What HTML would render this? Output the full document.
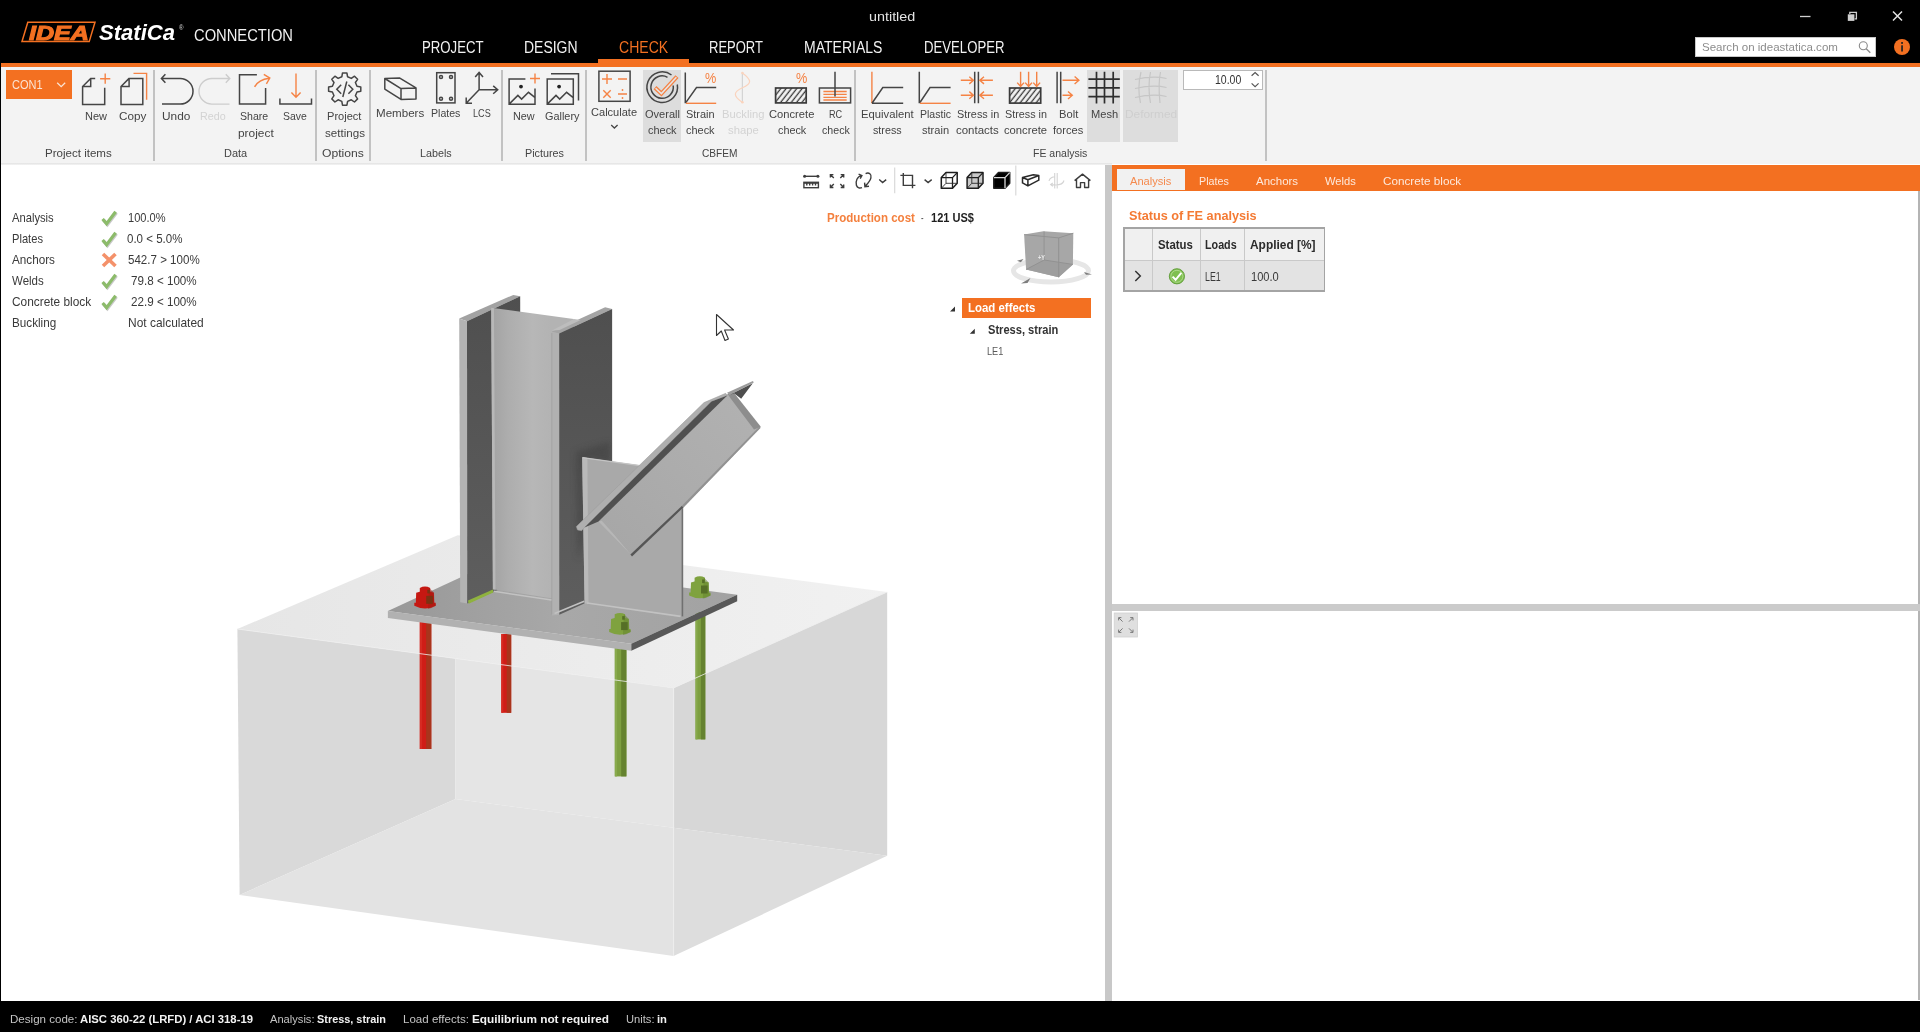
<!DOCTYPE html>
<html><head><meta charset="utf-8"><title>untitled</title>
<style>
*{box-sizing:border-box;margin:0;padding:0}
html,body{width:1920px;height:1032px;overflow:hidden;background:#fff;font-family:"Liberation Sans",sans-serif;}
#app{position:absolute;left:0;top:0;width:1920px;height:1032px;overflow:hidden;background:#fff}
.abs{position:absolute}
.t{position:absolute;white-space:nowrap;transform-origin:0 0}
svg{position:absolute;left:0;top:0;overflow:visible}
.k{fill:none;stroke:#454545;stroke-width:1.5}
.o{fill:none;stroke:#f58345;stroke-width:1.4}
.g{fill:none;stroke:#cdcdcd;stroke-width:1.4}
</style></head><body><div id="app">
<div class="abs" style="left:0;top:0;width:1920px;height:63px;background:#000"></div>
<div class="abs" style="left:0;top:63px;width:1920px;height:4px;background:#f37021"></div>
<div class="abs" style="left:598px;top:59px;width:91px;height:5px;background:#f37021"></div>
<svg width="320" height="60" viewBox="0 0 320 60"><polygon points="27.8,22.3 95,22.3 89.2,41.6 22,41.6" fill="none" stroke="#f37021" stroke-width="1.5"/></svg>
<div class="t" style="left:28.50px;top:23px;font-size:20.5px;line-height:20.5px;color:#f37021;font-weight:bold;font-style:italic;transform:scaleX(1.2246);-webkit-text-stroke:1.1px #f37021;">IDEA</div>
<div class="t" style="left:99.00px;top:23px;font-size:21.5px;line-height:21.5px;color:#fff;font-weight:bold;font-style:italic;transform:scaleX(1.0261);">StatiCa</div>
<div class="t" style="left:178.50px;top:25px;font-size:6.5px;line-height:6.5px;color:#ddd;transform:scaleX(0.9419);">®</div>
<div class="t" style="left:193.50px;top:28px;font-size:15.6px;line-height:15.6px;color:#f2f2f2;transform:scaleX(0.9444);">CONNECTION</div>
<div class="t" style="left:868.50px;top:11px;font-size:12.6px;line-height:12.6px;color:#e4e4e4;transform:scaleX(1.1394);">untitled</div>
<div class="t" style="left:421.80px;top:40px;font-size:15.8px;line-height:15.8px;color:#f2f2f2;transform:scaleX(0.8357);">PROJECT</div>
<div class="t" style="left:524.40px;top:40px;font-size:15.8px;line-height:15.8px;color:#f2f2f2;transform:scaleX(0.8846);">DESIGN</div>
<div class="t" style="left:618.80px;top:40px;font-size:15.8px;line-height:15.8px;color:#f37021;transform:scaleX(0.8897);">CHECK</div>
<div class="t" style="left:708.80px;top:40px;font-size:15.8px;line-height:15.8px;color:#f2f2f2;transform:scaleX(0.8235);">REPORT</div>
<div class="t" style="left:804.00px;top:40px;font-size:15.8px;line-height:15.8px;color:#f2f2f2;transform:scaleX(0.8869);">MATERIALS</div>
<div class="t" style="left:924.00px;top:40px;font-size:15.8px;line-height:15.8px;color:#f2f2f2;transform:scaleX(0.8332);">DEVELOPER</div>
<svg width="1920" height="63" viewBox="0 0 1920 63">
  <line x1="1800" y1="16.5" x2="1810.5" y2="16.5" stroke="#cfcfcf" stroke-width="1.3"/>
  <rect x="1847.8" y="14.3" width="6.6" height="6.6" fill="#cfcfcf"/>
  <path d="M1849.8 14 V12.3 H1856.4 V18.9 H1854.6" fill="none" stroke="#cfcfcf" stroke-width="1.3"/>
  <path d="M1893 11.5 L1902 20.5 M1902 11.5 L1893 20.5" stroke="#e4e4e4" stroke-width="1.5" fill="none"/>
  <rect x="1695.5" y="37.5" width="180" height="19" fill="#fff" stroke="#c8c8c8"/>
  <circle cx="1863.3" cy="45.7" r="4" fill="none" stroke="#8a8a8a" stroke-width="1.1"/><line x1="1866.2" y1="48.8" x2="1870.3" y2="52.8" stroke="#8a8a8a" stroke-width="1.3"/>
  <circle cx="1902" cy="47" r="8" fill="#f37021"/><rect x="1901.2" y="45.3" width="1.7" height="6.2" fill="#222"/><rect x="1901.2" y="42" width="1.7" height="1.9" fill="#222"/>
</svg>
<div class="t" style="left:1702.00px;top:41px;font-size:11.6px;line-height:11.6px;color:#8c8c8c;transform:scaleX(0.9948);">Search on ideastatica.com</div>
<div class="abs" style="left:0;top:67px;width:1920px;height:96.5px;background:#f3f3f3"></div>
<div class="abs" style="left:0;top:163px;width:1112px;height:2px;background:linear-gradient(#e2e2e2,#f4f4f4)"></div>
<div class="abs" style="left:153.3px;top:69.5px;width:1.4px;height:91px;background:#c2c2c2"></div>
<div class="abs" style="left:315.3px;top:69.5px;width:1.4px;height:91px;background:#c2c2c2"></div>
<div class="abs" style="left:369.3px;top:69.5px;width:1.4px;height:91px;background:#c2c2c2"></div>
<div class="abs" style="left:501.3px;top:69.5px;width:1.4px;height:91px;background:#c2c2c2"></div>
<div class="abs" style="left:585.3px;top:69.5px;width:1.4px;height:91px;background:#c2c2c2"></div>
<div class="abs" style="left:854.3px;top:69.5px;width:1.4px;height:91px;background:#c2c2c2"></div>
<div class="abs" style="left:1265.3px;top:69.5px;width:1.4px;height:91px;background:#c2c2c2"></div>
<div class="abs" style="left:642.5px;top:70.4px;width:38.39999999999998px;height:71.2px;background:#dddddd"></div>
<div class="abs" style="left:1087px;top:70.4px;width:33px;height:71.2px;background:#dddddd"></div>
<div class="abs" style="left:1123.1px;top:70.4px;width:54.700000000000045px;height:71.2px;background:#dddddd"></div>
<div class="abs" style="left:6px;top:69.5px;width:66px;height:29.5px;background:#f37021"></div>
<div class="t" style="left:11.80px;top:79px;font-size:12px;line-height:12px;color:#fbe3d3;transform:scaleX(0.9173);">CON1</div>
<div class="abs" style="left:1183.4px;top:69.6px;width:79.8px;height:20.2px;background:#fff;border:1.2px solid #b9b9b9"></div>
<div class="t" style="left:1215.30px;top:74px;font-size:12px;line-height:12px;color:#333;transform:scaleX(0.8749);">10.00</div>
<div class="t" style="left:84.60px;top:111px;font-size:11.8px;line-height:11.8px;color:#444;transform:scaleX(0.9299);">New</div>
<div class="t" style="left:119.20px;top:111px;font-size:11.8px;line-height:11.8px;color:#444;transform:scaleX(0.9908);">Copy</div>
<div class="t" style="left:162.10px;top:111px;font-size:11.8px;line-height:11.8px;color:#444;transform:scaleX(1.0035);">Undo</div>
<div class="t" style="left:200.30px;top:111px;font-size:11.8px;line-height:11.8px;color:#d3d3d3;transform:scaleX(0.9113);">Redo</div>
<div class="t" style="left:240.30px;top:111px;font-size:11.8px;line-height:11.8px;color:#444;transform:scaleX(0.8951);">Share</div>
<div class="t" style="left:237.80px;top:128px;font-size:11.8px;line-height:11.8px;color:#444;transform:scaleX(1.0085);">project</div>
<div class="t" style="left:282.80px;top:111px;font-size:11.8px;line-height:11.8px;color:#444;transform:scaleX(0.8846);">Save</div>
<div class="t" style="left:326.60px;top:111px;font-size:11.8px;line-height:11.8px;color:#444;transform:scaleX(0.9374);">Project</div>
<div class="t" style="left:324.70px;top:128px;font-size:11.8px;line-height:11.8px;color:#444;transform:scaleX(0.9840);">settings</div>
<div class="t" style="left:376.40px;top:108px;font-size:11.8px;line-height:11.8px;color:#444;transform:scaleX(0.9816);">Members</div>
<div class="t" style="left:431.30px;top:108px;font-size:11.8px;line-height:11.8px;color:#444;transform:scaleX(0.8962);">Plates</div>
<div class="t" style="left:472.80px;top:108px;font-size:11.8px;line-height:11.8px;color:#444;transform:scaleX(0.7712);">LCS</div>
<div class="t" style="left:512.80px;top:111px;font-size:11.8px;line-height:11.8px;color:#444;transform:scaleX(0.9172);">New</div>
<div class="t" style="left:545.00px;top:111px;font-size:11.8px;line-height:11.8px;color:#444;transform:scaleX(0.9223);">Gallery</div>
<div class="t" style="left:591.30px;top:107px;font-size:11.8px;line-height:11.8px;color:#444;transform:scaleX(0.9369);">Calculate</div>
<div class="t" style="left:644.70px;top:109px;font-size:11.8px;line-height:11.8px;color:#444;transform:scaleX(0.9357);">Overall</div>
<div class="t" style="left:648.20px;top:125px;font-size:11.8px;line-height:11.8px;color:#444;transform:scaleX(0.9269);">check</div>
<div class="t" style="left:686.10px;top:109px;font-size:11.8px;line-height:11.8px;color:#444;transform:scaleX(0.9286);">Strain</div>
<div class="t" style="left:686.10px;top:125px;font-size:11.8px;line-height:11.8px;color:#444;transform:scaleX(0.9269);">check</div>
<div class="t" style="left:721.60px;top:109px;font-size:11.8px;line-height:11.8px;color:#d3d3d3;transform:scaleX(0.9506);">Buckling</div>
<div class="t" style="left:728.10px;top:125px;font-size:11.8px;line-height:11.8px;color:#d3d3d3;transform:scaleX(0.9579);">shape</div>
<div class="t" style="left:769.30px;top:109px;font-size:11.8px;line-height:11.8px;color:#444;transform:scaleX(0.9476);">Concrete</div>
<div class="t" style="left:777.70px;top:125px;font-size:11.8px;line-height:11.8px;color:#444;transform:scaleX(0.9171);">check</div>
<div class="t" style="left:828.80px;top:109px;font-size:11.8px;line-height:11.8px;color:#444;transform:scaleX(0.7741);">RC</div>
<div class="t" style="left:821.50px;top:125px;font-size:11.8px;line-height:11.8px;color:#444;transform:scaleX(0.9009);">check</div>
<div class="t" style="left:861.30px;top:109px;font-size:11.8px;line-height:11.8px;color:#444;transform:scaleX(0.9545);">Equivalent</div>
<div class="t" style="left:873.30px;top:125px;font-size:11.8px;line-height:11.8px;color:#444;transform:scaleX(0.9095);">stress</div>
<div class="t" style="left:919.60px;top:109px;font-size:11.8px;line-height:11.8px;color:#444;transform:scaleX(0.8921);">Plastic</div>
<div class="t" style="left:921.50px;top:125px;font-size:11.8px;line-height:11.8px;color:#444;transform:scaleX(0.9393);">strain</div>
<div class="t" style="left:956.50px;top:109px;font-size:11.8px;line-height:11.8px;color:#444;transform:scaleX(0.9193);">Stress in</div>
<div class="t" style="left:956.00px;top:125px;font-size:11.8px;line-height:11.8px;color:#444;transform:scaleX(0.9714);">contacts</div>
<div class="t" style="left:1004.60px;top:109px;font-size:11.8px;line-height:11.8px;color:#444;transform:scaleX(0.9150);">Stress in</div>
<div class="t" style="left:1004.20px;top:125px;font-size:11.8px;line-height:11.8px;color:#444;transform:scaleX(0.9524);">concrete</div>
<div class="t" style="left:1058.60px;top:109px;font-size:11.8px;line-height:11.8px;color:#444;transform:scaleX(0.9482);">Bolt</div>
<div class="t" style="left:1053.00px;top:125px;font-size:11.8px;line-height:11.8px;color:#444;transform:scaleX(0.9423);">forces</div>
<div class="t" style="left:1090.90px;top:109px;font-size:11.8px;line-height:11.8px;color:#444;transform:scaleX(0.9393);">Mesh</div>
<div class="t" style="left:1124.80px;top:109px;font-size:11.8px;line-height:11.8px;color:#cfcfcf;transform:scaleX(1.0077);">Deformed</div>
<div class="t" style="left:45.00px;top:148px;font-size:11.8px;line-height:11.8px;color:#444;transform:scaleX(0.9794);">Project items</div>
<div class="t" style="left:224.00px;top:148px;font-size:11.8px;line-height:11.8px;color:#444;transform:scaleX(0.9296);">Data</div>
<div class="t" style="left:322.20px;top:148px;font-size:11.8px;line-height:11.8px;color:#444;transform:scaleX(1.0307);">Options</div>
<div class="t" style="left:420.30px;top:148px;font-size:11.8px;line-height:11.8px;color:#444;transform:scaleX(0.9122);">Labels</div>
<div class="t" style="left:524.80px;top:148px;font-size:11.8px;line-height:11.8px;color:#444;transform:scaleX(0.9155);">Pictures</div>
<div class="t" style="left:702.20px;top:148px;font-size:11.8px;line-height:11.8px;color:#444;transform:scaleX(0.8596);">CBFEM</div>
<div class="t" style="left:1033.30px;top:148px;font-size:11.8px;line-height:11.8px;color:#444;transform:scaleX(0.8917);">FE analysis</div>
<div class="t" style="left:705.40px;top:70px;font-size:15px;line-height:15px;color:#f58345;transform:scaleX(0.8464);">%</div>
<div class="t" style="left:795.80px;top:70px;font-size:15px;line-height:15px;color:#f58345;transform:scaleX(0.8464);">%</div>
<svg width="1920" height="170" viewBox="0 0 1920 170">
<path d="M57.2 82.8 L61.2 86.6 L65.2 82.8" fill="none" stroke="#fbe3d3" stroke-width="1.3"/>
<path d="M1251.6 75.8 L1255.1 72.5 L1258.6 75.8 M1251.6 83.4 L1255.1 86.7 L1258.6 83.4" fill="none" stroke="#555" stroke-width="1.2"/>
<path d="M611.2 125 L614.4 128 L617.6 125" fill="none" stroke="#444" stroke-width="1.3"/>
<path class="k" d="M95.2 78.4 H90.7 L82.6 86.5 V104.6 H104.7 V87.8 M90.7 78.4 V86.5 H82.6"/>
<path class="o" d="M105.2 73.6 V83.8 M100.1 78.7 H110.3"/>
<path class="k" d="M129.1 78.4 L121 86.5 V104.6 H142.8 V78.4 Z M129.1 78.4 V86.5 H121"/>
<path class="o" d="M133.5 73.4 H146.6 V99.8"/>
<path class="k" d="M165.4 74.2 L161.4 78.5 L165.4 82.8 M161.4 78.5 H180.2 A12.8 12.8 0 0 1 180.2 104.1 H162"/>
<path class="g" d="M225.8 74.2 L229.8 78.5 L225.8 82.8 M229.8 78.5 H211.8 A12.8 12.8 0 0 0 211.8 104.1 H229.5"/>
<path class="k" d="M256.9 74.8 H239.5 V104.1 H265.6 V87.9"/>
<path class="o" d="M254.6 86.8 Q258.5 79.5 269.3 78.2 M263.8 74.3 L269.8 78.1 L266.4 83.8"/>
<path class="k" d="M279.9 98.6 V104.1 H311.5 V98.6"/>
<path class="o" d="M296 73.6 V97.2 M291.4 92.4 L296 97.3 L300.6 92.4"/>
<path class="k" d="M357.0 86.2 L360.8 86.9 L360.8 91.3 L357.0 92.0 L355.4 95.7 L357.6 98.9 L354.5 102.0 L351.3 99.8 L347.6 101.4 L346.9 105.2 L342.5 105.2 L341.8 101.4 L338.1 99.8 L334.9 102.0 L331.8 98.9 L334.0 95.7 L332.4 92.0 L328.6 91.3 L328.6 86.9 L332.4 86.2 L334.0 82.5 L331.8 79.3 L334.9 76.2 L338.1 78.4 L341.8 76.8 L342.5 73.0 L346.9 73.0 L347.6 76.8 L351.3 78.4 L354.5 76.2 L357.6 79.3 L355.4 82.5 Z" stroke-linejoin="round"/>
<path class="k" d="M341.2 84.8 L336.8 89.3 L341.2 93.8 M348.4 84.8 L352.8 89.3 L348.4 93.8 M346.8 81.5 L342.8 97" stroke-width="1.3"/>
<path class="k" d="M384.8 78.5 L399.4 77.9 L416 87.9 L401 88.6 Z M401 88.6 V99.4 L416 99.1 V87.9 M384.8 78.5 V89.1 L401 99.4" stroke-linejoin="round"/>
<rect class="k" x="436.7" y="72.7" width="18.3" height="30.2"/><circle class="k" cx="441" cy="77" r="1.5" stroke-width="1.2"/><circle class="k" cx="441" cy="98.8" r="1.5" stroke-width="1.2"/><circle class="k" cx="451" cy="77" r="1.5" stroke-width="1.2"/><circle class="k" cx="451" cy="98.8" r="1.5" stroke-width="1.2"/>
<path class="k" d="M479.1 89.8 V72.6 M475.2 77 L479.1 72.4 L483 77 M479.1 89.8 H497.5 M493.2 85.9 L497.7 89.8 L493.2 93.7 M479.1 89.8 L466.4 103.1 M466.2 97.4 V103.3 H472"/>
<path class="k" d="M525.4 78.9 H509.1 V104.2 H535 V88.5 M509.6 103.6 L517.9 95.4 L521.6 99.1 L528.5 92.3 L534.8 97.3"/><circle cx="521" cy="86.6" r="1.9" fill="#222"/>
<path class="o" d="M535 73.5 V83.5 M530 78.5 H540"/>
<path class="k" d="M547.2 78.9 H573.3 V104.2 H547.2 Z M547.7 103.6 L556 95.4 L559.7 99.1 L566.6 92.3 L572.9 97.3 M551 73.8 H578.5 V100.4"/><circle cx="559.1" cy="86.6" r="1.9" fill="#222"/>
<rect class="k" x="598.9" y="71.2" width="31.2" height="30.1"/>
<path class="o" d="M607 74 V84 M602 79 H612 M618 79 H627 M603.3 90.3 L610.7 97.7 M610.7 90.3 L603.3 97.7 M618 94 H627"/><circle cx="622.5" cy="90" r="0.9" fill="#f58345"/><circle cx="622.5" cy="98" r="0.9" fill="#f58345"/>
<path class="k" d="M671.5 75 A15.3 15.3 0 1 0 677.3 84.5" stroke-width="1.6"/>
<path class="k" d="M667.5 77.3 A11.2 11.2 0 1 0 673.2 85.5" stroke-width="1.6"/>
<path d="M655 87.6 L661.4 93.6 L677 76.6" fill="none" stroke="#f58345" stroke-width="4.2" stroke-linejoin="miter"/><path d="M655.6 88.2 L661.4 93.6 L676.4 77.3" fill="none" stroke="#e6e6e6" stroke-width="1.5"/>
<path class="k" d="M685.3 72.6 V103.2 M685.8 102.6 L696.5 87.6 H716.2"/><path class="o" d="M686 103.3 H716.2"/>
<path d="M742.4 73 V102" fill="none" stroke="#d4d4d4" stroke-width="1.2"/><path d="M742.4 73 C752 80 752 84 742.4 87.7 C733 92 733 96 742.4 102.4" fill="none" stroke="#fad3bd" stroke-width="1.2"/><circle cx="742.4" cy="73" r="1.3" fill="#fad3bd"/><circle cx="742.4" cy="102.3" r="1.3" fill="#fad3bd"/>
<defs><pattern id="hat" width="4.2" height="4.2" patternUnits="userSpaceOnUse" patternTransform="rotate(-52)"><rect width="4.2" height="4.2" fill="#f3f3f3"/><line x1="0" y1="2" x2="4.2" y2="2" stroke="#3a3a3a" stroke-width="1.3"/></pattern></defs>
<rect x="775.6" y="88" width="30.6" height="14.9" fill="url(#hat)" stroke="#3a3a3a" stroke-width="1.7"/>
<rect class="k" x="819.4" y="88" width="31.2" height="14.9"/><path class="o" d="M823.4 91.5 H846.7 M823.4 94.4 H846.7 M823.4 97.4 H846.7 M823.4 100 H846.7" stroke-width="1"/><path class="k" d="M835 71.8 V96.6"/>
<path class="o" d="M871.9 71.8 V103.2"/><path class="k" d="M872 103.2 L882.8 87.6 H903.2 M872 103.2 H903.2"/>
<path class="k" d="M919.3 71.8 V103.2 M919.6 103 L930 87.6 H950.6"/><path class="o" d="M920 103.3 H950.6"/>
<path class="k" d="M974.7 71.8 V103.2 M978.4 71.8 V103.2"/><path class="o" d="M960.8 80.3 H973.2 M969.3 76.7 L973.4 80.3 L969.3 83.89999999999999 M992.9 80.3 H980 M984 76.7 L979.8 80.3 L984 83.89999999999999"/><path class="o" d="M960.8 95.2 H973.2 M969.3 91.60000000000001 L973.4 95.2 L969.3 98.8 M992.9 95.2 H980 M984 91.60000000000001 L979.8 95.2 L984 98.8"/>
<rect x="1009.6" y="88" width="31.1" height="15.1" fill="url(#hat)" stroke="#3a3a3a" stroke-width="1.7"/><path class="o" d="M1020.6 71.8 V86.2 M1017.2 82.6 L1020.6 86.5 L1024.0 82.6"/><path class="o" d="M1028.6 71.8 V86.2 M1025.1999999999998 82.6 L1028.6 86.5 L1032.0 82.6"/><path class="o" d="M1036.7 71.8 V86.2 M1033.3 82.6 L1036.7 86.5 L1040.1000000000001 82.6"/>
<path class="k" d="M1057.1 71.8 V103.2 M1060.7 71.8 V103.2"/><path class="o" d="M1062.5 80.3 H1078.6 M1074.6 76.5 L1078.9 80.3 L1074.6 84.1 M1062.5 95.2 H1072 M1068 91.4 L1072.3 95.2 L1068 99"/>
<path d="M1096.5 71.8 V103.6 M1104.5 71.8 V103.6 M1113.2 71.8 V103.6 M1088.4 79.1 H1119.8 M1088.4 87.9 H1119.8 M1088.4 96.6 H1119.8" fill="none" stroke="#2e2e2e" stroke-width="1.7"/>
<path d="M1141 72 C1138 84 1138 92 1140.5 103 M1150.5 72 C1148 84 1148.5 92 1150.5 103 M1160.5 72 C1158 84 1159 92 1160 103 M1135 79.5 C1146 77 1156 76 1166.5 78.5 M1135 88.5 C1146 86 1156 85 1166.5 87.5 M1135 97.5 C1146 95 1156 94 1166.5 96.5" fill="none" stroke="#c6c6c6" stroke-width="1.2"/>
</svg>
<svg width="1105" height="1000" viewBox="0 0 1105 1000">
<defs>
<filter id="blur3" x="-50%" y="-50%" width="200%" height="200%"><feGaussianBlur stdDeviation="3"/></filter>
<clipPath id="cpf"><polygon points="559.2,333.5 612.1,309.1 612.1,591 559.3,614.8"/></clipPath>
<linearGradient id="gweb" x1="0" x2="1" y1="0" y2="0"><stop offset="0" stop-color="#a2a2a2"/><stop offset="0.2" stop-color="#adadad"/><stop offset="0.5" stop-color="#b7b7b7"/><stop offset="0.72" stop-color="#b3b3b3"/><stop offset="1" stop-color="#b3b3b3"/></linearGradient>
<linearGradient id="gdk" x1="0" x2="0" y1="0" y2="1"><stop offset="0" stop-color="#4f4f4f"/><stop offset="1" stop-color="#5e5e5e"/></linearGradient>
<linearGradient id="gbr" x1="0" x2="1" y1="1" y2="0"><stop offset="0" stop-color="#a6a6a6"/><stop offset="1" stop-color="#b2b2b2"/></linearGradient>
<linearGradient id="gpl" x1="0" x2="1" y1="0" y2="0"><stop offset="0" stop-color="#989898"/><stop offset="0.5" stop-color="#a8a8a8"/><stop offset="1" stop-color="#a2a2a2"/></linearGradient>
<linearGradient id="gtop" x1="0" x2="1" y1="0" y2="0"><stop offset="0" stop-color="#e6e6e6"/><stop offset="1" stop-color="#f1f1f1"/></linearGradient>
</defs>
<polygon points="237.4,629.0 457.7,535.3 887.2,592.0 673.6,687.9" fill="url(#gtop)" />
<polygon points="237.4,629.0 455.5,658.4 455.5,799.0 239.6,895.0" fill="#d9d9d9" />
<polygon points="455.5,658.4 673.6,687.9 673.6,827.7 455.5,799.0" fill="#e5e5e5" />
<polygon points="239.6,895.0 455.5,799.0 673.6,827.7 673.6,956.1" fill="#e3e3e3" />
<polygon points="673.6,687.9 887.2,592.0 887.2,855.8 673.6,827.7" fill="#d7d7d7" />
<polygon points="673.6,827.7 887.2,855.8 673.6,956.1" fill="#dddddd" />
<rect x="419.8" y="620" width="11.5" height="129" fill="#cf1d17"/><rect x="426.1" y="620" width="5.2" height="129" fill="#a8351c"/><rect x="419.8" y="620" width="2.3" height="129" fill="#d62a22"/>
<rect x="501.3" y="634" width="9.9" height="78.79999999999995" fill="#cf1d17"/><rect x="506.7" y="634" width="4.5" height="78.79999999999995" fill="#a8351c"/><rect x="501.3" y="634" width="2.0" height="78.79999999999995" fill="#d62a22"/>
<rect x="614.8" y="646" width="11.6" height="130.39999999999998" fill="#7d9f40"/><rect x="621.2" y="646" width="5.2" height="130.39999999999998" fill="#65822f"/><rect x="614.8" y="646" width="2.3" height="130.39999999999998" fill="#88aa4c"/>
<rect x="695.5" y="612" width="9.8" height="127.39999999999998" fill="#7d9f40"/><rect x="700.9" y="612" width="4.4" height="127.39999999999998" fill="#65822f"/><rect x="695.5" y="612" width="2.0" height="127.39999999999998" fill="#88aa4c"/>
<path d="M237.4 629 L673.6 687.9 L887.2 592 M673.6 687.9 L673.6 956.1" fill="none" stroke="#efefef" stroke-width="0.8"/>
<polygon points="387.9,611.0 493.8,562.1 737.2,594.8 631.3,643.7" fill="url(#gpl)" />
<polygon points="387.9,611.0 631.3,643.7 631.3,650.7 387.9,618.0" fill="#b1b1b1" />
<polygon points="631.3,643.7 737.2,594.8 737.2,601.2 631.3,650.7" fill="#585858" />
<polygon points="459.2,318.4 513.3,294.9 520.2,296.3 467.0,321.3" fill="#a2a2a2" />
<polygon points="459.2,318.4 467.0,321.3 467.2,603.4 460.2,602.2" fill="#b3b3b3" />
<polygon points="467.0,321.3 520.2,296.3 520.2,580.0 467.2,603.4" fill="url(#gdk)" />
<polygon points="491.2,307.7 573.7,319.0 573.7,602.0 551.4,598.2 492.9,589.3" fill="url(#gweb)" />
<polygon points="491.2,307.7 494.0,308.2 495.5,589.7 492.9,589.3" fill="#b8b8b8" />
<polygon points="468.0,600.6 492.9,589.6 493.3,592.4 468.6,603.8" fill="#8fb23f" />
<polygon points="551.6,331.7 605.1,307.3 612.1,309.1 559.2,333.5" fill="#a4a4a4" />
<polygon points="551.6,331.7 559.2,333.5 559.3,614.8 552.0,615.4" fill="#b1b1b1" />
<polygon points="559.2,333.5 612.1,309.1 612.1,591.0 559.3,614.8" fill="url(#gdk)" />
<path d="M551.8 333 V614.5" stroke="#9a9a9a" stroke-width="0.6" fill="none"/>
<polygon points="574.0,319.0 580.7,320.1 559.6,330.0 552.0,330.6" fill="#bdbdbd" />
<polygon points="576.0,452.0 610.0,442.0 610.0,462.0 590.0,458.5 584.0,470.0 584.0,540.0 578.0,560.0" fill="#3c3c3c" opacity="0.5" filter="url(#blur3)" clip-path="url(#cpf)"/>
<polygon points="582.2,457.2 640.0,465.2 683.0,471.0 683.0,616.5 584.6,603.4" fill="#a9a9a9" />
<polygon points="582.2,457.2 587.4,458.0 588.5,603.9 584.6,603.4" fill="#b9b9b9" />
<polygon points="681.6,506.0 683.2,506.0 683.2,616.5 681.6,616.3" fill="#707070" />
<path d="M582.6 457.6 L640 465.6" stroke="#c4c4c4" stroke-width="1.1" fill="none"/>
<path d="M493.7 591.3 L551.5 600 M554.6 613.6 L584.2 601.2 M587.1 603 L680.6 616.4" fill="none" stroke="#c2c2c2" stroke-width="1.6"/>
<polygon points="640.0,455.0 690.0,455.0 690.0,507.0 683.4,507.0 660.0,490.0" fill="#ffffff" />
<polygon points="598.5,521.4 727.3,394.0 760.6,427.8 683.4,507.4 632.0,556.4" fill="url(#gbr)" />
<polygon points="598.5,521.4 601.8,520.8 614.0,534.5 631.2,555.0" fill="#b7b7b7" />
<polygon points="630.4,554.4 682.0,505.8 683.4,507.4 632.0,556.4" fill="#565656" />
<polygon points="682.0,505.8 759.4,426.6 760.6,427.8 683.4,507.4" fill="#929292" />
<polygon points="727.3,394.0 734.3,393.3 760.8,426.8 754.0,429.4" fill="#8d8d8d" />
<polygon points="576.3,526.6 704.0,402.6 725.7,393.3 727.3,395.5 711.4,401.4 584.5,527.5 581.6,530.7 577.5,530.0" fill="#afafaf" stroke="#9a9a9a" stroke-width="0.5"/>
<polygon points="584.5,527.5 711.4,401.4 727.3,395.5 598.5,521.4" fill="#505050" />
<polygon points="727.0,392.8 752.9,380.9 753.8,382.6 729.5,395.0" fill="#9c9c9c" />
<polygon points="730.5,394.6 752.8,383.2 741.2,398.7 734.3,393.5" fill="#4e4e4e" />
<path d="M414.3 602.8 L414.3 605.8 Q425 611.3 435.7 605.8 L435.7 602.8 Z" fill="#c51812"/><path d="M415.8 603.8 L416.2 592.8 Q425 589.3 433.8 592.8 L434.2 603.8 Q425 606.8 415.8 603.8Z" fill="#c51812"/><path d="M419.8 592.8 V588.0 Q425 585.1999999999999 430.2 588.0 V592.8 Z" fill="#c51812"/><path d="M429 587.8 L434 592.8 L434.4 603.8 L435.7 603.8 V605.8 Q432 608.3 428 608.8 Z" fill="#a41c12" opacity="0.55"/><rect x="426.2" y="595.8" width="6.6" height="8" fill="#7a3212"/><rect x="427.3" y="589.8" width="2.6" height="3.6" fill="#7a3212"/>
<path d="M609.1999999999999 629.1 L609.1999999999999 632.1 Q619.9 637.6 630.6 632.1 L630.6 629.1 Z" fill="#7fa23f"/><path d="M610.6999999999999 630.1 L611.1 619.1 Q619.9 615.6 628.6999999999999 619.1 L629.1 630.1 Q619.9 633.1 610.6999999999999 630.1Z" fill="#7fa23f"/><path d="M614.6999999999999 619.1 V614.3000000000001 Q619.9 611.5 625.1 614.3000000000001 V619.1 Z" fill="#7fa23f"/><path d="M623.9 614.1 L628.9 619.1 L629.3 630.1 L630.6 630.1 V632.1 Q626.9 634.6 622.9 635.1 Z" fill="#66852f" opacity="0.55"/><rect x="621.1" y="622.1" width="6.6" height="8" fill="#566f27"/><rect x="622.1999999999999" y="616.1" width="2.6" height="3.6" fill="#566f27"/>
<path d="M689.0999999999999 592.5 L689.0999999999999 595.5 Q699.8 601.0 710.5 595.5 L710.5 592.5 Z" fill="#7fa23f"/><path d="M690.5999999999999 593.5 L691.0 582.5 Q699.8 579.0 708.5999999999999 582.5 L709.0 593.5 Q699.8 596.5 690.5999999999999 593.5Z" fill="#7fa23f"/><path d="M694.5999999999999 582.5 V577.7 Q699.8 574.9 705.0 577.7 V582.5 Z" fill="#7fa23f"/><path d="M703.8 577.5 L708.8 582.5 L709.1999999999999 593.5 L710.5 593.5 V595.5 Q706.8 598.0 702.8 598.5 Z" fill="#66852f" opacity="0.55"/><rect x="701.0" y="585.5" width="6.6" height="8" fill="#566f27"/><rect x="702.0999999999999" y="579.5" width="2.6" height="3.6" fill="#566f27"/>
</svg>
<svg width="1105" height="200" viewBox="0 0 1105 200">
<path d="M894.7 167.5 V193.3 M1015.8 165.5 V195.5" stroke="#d9d9d9" stroke-width="1.2"/>
<path fill="none" stroke="#3d3d3d" stroke-width="1.4" d="M804.3 176.3 H818.2"/><circle cx="804.6" cy="176.3" r="1.5" fill="#3d3d3d"/><circle cx="817.9" cy="176.3" r="1.5" fill="#3d3d3d"/><rect fill="none" stroke="#3d3d3d" stroke-width="1.4" x="803.9" y="182.3" width="14.5" height="5.4" stroke-width="1.2"/><rect x="803.9" y="182" width="14.5" height="1.8" fill="#3d3d3d"/><path fill="none" stroke="#3d3d3d" stroke-width="1.4" d="M806.8 183 v2.6 M809.7 183 v2.6 M812.6 183 v2.6 M815.5 183 v2.6" stroke-width="0.9"/>
<path fill="none" stroke="#3d3d3d" stroke-width="1.4" d="M830.4 177.6 V174.6 H833.4 M830.6 174.8 L833.8 178 M840.7 174.6 H843.7 V177.6 M843.5 174.8 L840.3 178 M830.4 184.5 V187.5 H833.4 M830.6 187.3 L833.8 184.1 M840.7 187.5 H843.7 V184.5 M843.5 187.3 L840.3 184.1" stroke-width="1.3"/>
<path fill="none" stroke="#3d3d3d" stroke-width="1.4" d="M861.6 175.6 C857.2 176.2 855.3 181.5 856.4 185.3 C857.3 188.2 860 188.4 862 187.6 M858.6 174.2 L861.9 175.6 L860.2 178.6 M865.6 173.6 C869 172 871.8 174.2 870.9 177.8 C870.2 181 867.2 184 865.2 186.2 M864.6 182.6 L864.9 186.7 L869 186.2" stroke-width="1.5"/>
<path fill="none" stroke="#3d3d3d" stroke-width="1.4" d="M879.2 179.6 L882.6 182.6 L886.2 179.6 M924.6 179.6 L928.1 182.6 L931.7 179.6" stroke-width="1.2"/>
<path fill="none" stroke="#3d3d3d" stroke-width="1.4" d="M903.3 172.9 V185.4 H915.4 M900.4 175.4 H912.5 V188.3" stroke-width="1.5"/>
<path d="M941.3 177.6 L946.0 172.6 H957.2 V183.29999999999998 L952.5 188.29999999999998 H941.3 Z" fill="none" stroke="#1e1e1e" stroke-width="1.5" stroke-linejoin="round"/><path d="M941.3 177.6 H952.5 V188.29999999999998 M952.5 177.6 L957.2 172.6" fill="none" stroke="#1e1e1e" stroke-width="1.3"/><path d="M946.0 172.6 V183.29999999999998 H957.2 M946.0 183.29999999999998 L941.3 188.29999999999998" fill="none" stroke="#2a2a2a" stroke-width="0.9"/>
<path d="M967.1 177.6 L971.8000000000001 172.6 H983.0000000000001 V183.29999999999998 L978.3000000000001 188.29999999999998 H967.1 Z" fill="#c9c9c9" stroke="#1e1e1e" stroke-width="1.5" stroke-linejoin="round"/><path d="M967.1 177.6 H978.3000000000001 V188.29999999999998 M978.3000000000001 177.6 L983.0000000000001 172.6" fill="none" stroke="#1e1e1e" stroke-width="1.3"/><path d="M971.8000000000001 172.6 V183.29999999999998 H983.0000000000001 M971.8000000000001 183.29999999999998 L967.1 188.29999999999998" fill="none" stroke="#2a2a2a" stroke-width="0.9"/>
<path d="M993.8 177.6 L998.5 172.6 H1009.7 V183.29999999999998 L1005.0 188.29999999999998 H993.8 Z" fill="#000" stroke="#1e1e1e" stroke-width="1.5" stroke-linejoin="round"/><path d="M993.8 177.6 H1005.0 V188.29999999999998 M1005.0 177.6 L1009.7 172.6" fill="none" stroke="#d8d8d8" stroke-width="1.3"/>
<path d="M1022.5 177.5 L1033.3 174.7 L1038.8 175.5 L1027.9 179.7 Z M1022.5 177.5 V182.9 L1027.9 185.9 V179.7 M1027.9 185.9 L1038.8 180.2 V175.5" fill="none" stroke="#2a2a2a" stroke-width="1.5" stroke-linejoin="round"/>
<path d="M1054.7 173 V188.4 M1057.2 173 V188.4 M1049 181 C1049.5 178 1053 176.8 1054.5 176.8 M1064 180.5 C1063 184.5 1058 185.6 1051 184.6 M1052.8 183 L1050.6 184.6 L1052.8 186.4" fill="none" stroke="#d4d4d4" stroke-width="1.1"/>
<path fill="none" stroke="#3d3d3d" stroke-width="1.4" d="M1074.6 180.6 L1082.5 174.1 L1090.4 180.6 M1076.5 179.3 V187.5 H1080.5 V182.6 H1084.6 V187.5 H1088.6 V179.3" stroke-width="1.5" stroke-linejoin="round"/>
</svg>
<div class="t" style="left:12.00px;top:213px;font-size:11.9px;line-height:11.9px;color:#3a3a3a;transform:scaleX(0.9419);">Analysis</div>
<div class="t" style="left:127.50px;top:213.00px;font-size:11.9px;line-height:11.9px;color:#3a3a3a;transform:scaleX(0.9296)">100.0%</div>
<div class="t" style="left:12.00px;top:234px;font-size:11.9px;line-height:11.9px;color:#3a3a3a;transform:scaleX(0.9371);">Plates</div>
<div class="t" style="left:127.00px;top:234.00px;font-size:11.9px;line-height:11.9px;color:#3a3a3a;transform:scaleX(0.9696)">0.0 &lt; 5.0%</div>
<div class="t" style="left:12.00px;top:255px;font-size:11.9px;line-height:11.9px;color:#3a3a3a;transform:scaleX(0.9846);">Anchors</div>
<div class="t" style="left:127.50px;top:255.00px;font-size:11.9px;line-height:11.9px;color:#3a3a3a;transform:scaleX(0.9725)">542.7 &gt; 100%</div>
<div class="t" style="left:12.00px;top:276px;font-size:11.9px;line-height:11.9px;color:#3a3a3a;transform:scaleX(0.9667);">Welds</div>
<div class="t" style="left:130.50px;top:276.00px;font-size:11.9px;line-height:11.9px;color:#3a3a3a;transform:scaleX(0.9788)">79.8 &lt; 100%</div>
<div class="t" style="left:12.00px;top:297px;font-size:11.9px;line-height:11.9px;color:#3a3a3a;transform:scaleX(0.9977);">Concrete block</div>
<div class="t" style="left:130.50px;top:297.00px;font-size:11.9px;line-height:11.9px;color:#3a3a3a;transform:scaleX(0.9788)">22.9 &lt; 100%</div>
<div class="t" style="left:12.00px;top:318px;font-size:11.9px;line-height:11.9px;color:#3a3a3a;transform:scaleX(0.9837);">Buckling</div>
<div class="t" style="left:127.50px;top:318.00px;font-size:11.9px;line-height:11.9px;color:#3a3a3a;transform:scaleX(1.0048)">Not calculated</div>
<svg width="300" height="340" viewBox="0 0 300 340">
<path d="M102.6 219 L106.6 223.6 L115.6 211.7" fill="none" stroke="#c9c9c9" stroke-width="3.4" transform="translate(0.8,0.9)"/><path d="M102.6 219 L106.6 223.6 L115.6 211.7" fill="none" stroke="#8cbb6a" stroke-width="3.2"/>
<path d="M102.6 240 L106.6 244.6 L115.6 232.7" fill="none" stroke="#c9c9c9" stroke-width="3.4" transform="translate(0.8,0.9)"/><path d="M102.6 240 L106.6 244.6 L115.6 232.7" fill="none" stroke="#8cbb6a" stroke-width="3.2"/>
<path d="M103 254 L115.5 266 M115.5 254 L103 266" fill="none" stroke="#f4916a" stroke-width="3.6"/>
<path d="M102.6 282 L106.6 286.6 L115.6 274.7" fill="none" stroke="#c9c9c9" stroke-width="3.4" transform="translate(0.8,0.9)"/><path d="M102.6 282 L106.6 286.6 L115.6 274.7" fill="none" stroke="#8cbb6a" stroke-width="3.2"/>
<path d="M102.6 303 L106.6 307.6 L115.6 295.7" fill="none" stroke="#c9c9c9" stroke-width="3.4" transform="translate(0.8,0.9)"/><path d="M102.6 303 L106.6 307.6 L115.6 295.7" fill="none" stroke="#8cbb6a" stroke-width="3.2"/>
</svg>
<div class="t" style="left:826.70px;top:213px;font-size:11.9px;line-height:11.9px;color:#f4803e;font-weight:bold;transform:scaleX(0.9717);">Production cost</div>
<div class="t" style="left:921.00px;top:213px;font-size:11.9px;line-height:11.9px;color:#555;transform:scaleX(0.6522);">-</div>
<div class="t" style="left:931.00px;top:213px;font-size:11.9px;line-height:11.9px;color:#1e1e1e;font-weight:bold;transform:scaleX(0.9289);">121 US$</div>
<svg width="1105" height="400" viewBox="0 0 1105 400">
<ellipse cx="1051" cy="270.8" rx="37.5" ry="11.2" fill="none" stroke="#e6e6e6" stroke-width="5"/>
<polygon points="1024.1,234.6 1043.4,231.2 1073.3,233.2 1072.9,264.4 1058.7,277.3 1026.1,269.5" fill="#a7a7a7" />
<polygon points="1044.1,260.0 1072.9,264.4 1058.7,277.3 1026.1,269.5" fill="#9e9e9e" />
<path d="M1044.1 231.5 V260 L1026.1 269.5 M1044.1 260 L1072.9 264.4 M1024.1 234.6 L1058.7 237.9 L1073.3 233.2 M1058.7 237.9 V277.3" fill="none" stroke="#909090" stroke-width="0.9"/>
<path d="M1021 283.5 l9.5 -5.5 l-3 5z M1092 274.5 l-8 -2.4 l2 2.6z M1017 260.8 l6.5 -1.8 l-2.6 3.2z" fill="#7d7d7d"/>
</svg>
<div class="t" style="left:1038.00px;top:254px;font-size:7.5px;line-height:7.5px;color:#e9e9e9;font-weight:bold;transform:scaleX(0.7253);">+Y</div>
<div class="abs" style="left:962.2px;top:297.6px;width:128.8px;height:20.2px;background:#f37021"></div>
<div class="t" style="left:968.40px;top:303px;font-size:11.9px;line-height:11.9px;color:#fff;font-weight:bold;transform:scaleX(0.9616);">Load effects</div>
<div class="t" style="left:987.70px;top:325px;font-size:11.9px;line-height:11.9px;color:#333;font-weight:bold;transform:scaleX(0.9339);">Stress, strain</div>
<div class="t" style="left:986.80px;top:345px;font-size:11.7px;line-height:11.7px;color:#5a5a5a;transform:scaleX(0.7875);">LE1</div>
<svg width="1105" height="400" viewBox="0 0 1105 400"><path d="M955 306.6 V311.6 H950 Z M974.8 328.7 V333.7 H969.8 Z" fill="#333"/><path d="M716.5 314.5 V335.5 L721.3 331 L725 340.5 L728.4 339 L724.6 330 L733.5 330 Z" fill="#fff" stroke="#333" stroke-width="1.1" stroke-linejoin="round"/></svg>
<div class="abs" style="left:1105.2px;top:164.5px;width:6.6px;height:836px;background:#c8c8c8"></div>
<div class="abs" style="left:1111.5px;top:164.6px;width:808.5px;height:26.4px;background:#f37021"></div>
<div class="abs" style="left:1117px;top:168.8px;width:68.3px;height:21.6px;background:#f1f1f1"></div>
<div class="t" style="left:1130.40px;top:176px;font-size:11.8px;line-height:11.8px;color:#f58a4e;transform:scaleX(0.9419);">Analysis</div>
<div class="t" style="left:1199.20px;top:176px;font-size:11.8px;line-height:11.8px;color:#fde9dc;transform:scaleX(0.9084);">Plates</div>
<div class="t" style="left:1256.00px;top:176px;font-size:11.8px;line-height:11.8px;color:#fde9dc;transform:scaleX(0.9722);">Anchors</div>
<div class="t" style="left:1325.20px;top:176px;font-size:11.8px;line-height:11.8px;color:#fde9dc;transform:scaleX(0.9457);">Welds</div>
<div class="t" style="left:1383.10px;top:176px;font-size:11.8px;line-height:11.8px;color:#fde9dc;transform:scaleX(0.9928);">Concrete block</div>
<div class="abs" style="left:1918.4px;top:191px;width:1.6px;height:809px;background:#b4b4b4"></div>
<div class="abs" style="left:1111.8px;top:604px;width:808.2px;height:6.6px;background:#cbcbcb"></div>
<div class="t" style="left:1128.60px;top:209px;font-size:13px;line-height:13px;color:#f47a33;font-weight:bold;transform:scaleX(0.9764);">Status of FE analysis</div>
<div class="abs" style="left:1123.2px;top:227.2px;width:201.8px;height:64.6px;background:#a4a4a4"></div>
<div class="abs" style="left:1124.6px;top:228.6px;width:199px;height:61.8px;background:#c9c9c9"></div>
<div class="abs" style="left:1124.6px;top:228.6px;width:27.4px;height:31.2px;background:#f0f0f0"></div>
<div class="abs" style="left:1124.6px;top:260.9px;width:27.4px;height:29.5px;background:#e3e3e3"></div>
<div class="abs" style="left:1153.2px;top:228.6px;width:46.5px;height:31.2px;background:#f0f0f0"></div>
<div class="abs" style="left:1153.2px;top:260.9px;width:46.5px;height:29.5px;background:#e3e3e3"></div>
<div class="abs" style="left:1200.9px;top:228.6px;width:42.9px;height:31.2px;background:#f0f0f0"></div>
<div class="abs" style="left:1200.9px;top:260.9px;width:42.9px;height:29.5px;background:#e3e3e3"></div>
<div class="abs" style="left:1245px;top:228.6px;width:78.6px;height:31.2px;background:#f0f0f0"></div>
<div class="abs" style="left:1245px;top:260.9px;width:78.6px;height:29.5px;background:#e3e3e3"></div>
<div class="t" style="left:1157.60px;top:240px;font-size:11.9px;line-height:11.9px;color:#2b2b2b;font-weight:bold;transform:scaleX(0.9572);">Status</div>
<div class="t" style="left:1205.30px;top:240px;font-size:11.9px;line-height:11.9px;color:#2b2b2b;font-weight:bold;transform:scaleX(0.9045);">Loads</div>
<div class="t" style="left:1250.00px;top:240px;font-size:11.9px;line-height:11.9px;color:#2b2b2b;font-weight:bold;transform:scaleX(1.0023);">Applied [%]</div>
<div class="t" style="left:1205.40px;top:272px;font-size:11.9px;line-height:11.9px;color:#3a3a3a;transform:scaleX(0.7412);">LE1</div>
<div class="t" style="left:1250.50px;top:272px;font-size:11.9px;line-height:11.9px;color:#3a3a3a;transform:scaleX(0.9326);">100.0</div>
<svg width="1920" height="700" viewBox="0 0 1920 700"><path d="M1135.3 271 L1140.3 276 L1135.3 281" fill="none" stroke="#333" stroke-width="1.5"/><circle cx="1176.9" cy="276.3" r="7.6" fill="#7fbf50" stroke="#5e9a35" stroke-width="0.9"/><circle cx="1176.9" cy="276.3" r="6" fill="none" stroke="#b7df98" stroke-width="0.8"/><path d="M1172.6 276.6 L1175.6 279.8 L1181.3 272.8" fill="none" stroke="#fff" stroke-width="2"/><rect x="1114.2" y="613" width="23.2" height="24" fill="#dfdfdf" stroke="#d0d0d0" stroke-width="0.8"/><path d="M1118.6 620.4 V617.6 H1121.4 M1118.9 617.9 L1122.6 621.6 M1130.2 617.6 H1133 V620.4 M1132.7 617.9 L1129 621.6 M1118.6 629.6 V632.4 H1121.4 M1118.9 632.1 L1122.6 628.4 M1130.2 632.4 H1133 V629.6 M1132.7 632.1 L1129 628.4" fill="none" stroke="#7a7a7a" stroke-width="1"/></svg>
<div class="abs" style="left:0;top:1000.8px;width:1920px;height:32px;background:#000"></div>
<div class="t" style="left:9.50px;top:1014px;font-size:11.5px;line-height:11.5px;color:#c4c4c4;transform:scaleX(1.0059);">Design code:</div>
<div class="t" style="left:80.00px;top:1014px;font-size:11.5px;line-height:11.5px;color:#f2f2f2;font-weight:bold;transform:scaleX(0.9832);">AISC 360-22 (LRFD) / ACI 318-19</div>
<div class="t" style="left:269.50px;top:1014px;font-size:11.5px;line-height:11.5px;color:#c4c4c4;transform:scaleX(0.9674);">Analysis:</div>
<div class="t" style="left:317.00px;top:1014px;font-size:11.5px;line-height:11.5px;color:#f2f2f2;font-weight:bold;transform:scaleX(0.9471);">Stress, strain</div>
<div class="t" style="left:402.50px;top:1014px;font-size:11.5px;line-height:11.5px;color:#c4c4c4;transform:scaleX(1.0051);">Load effects:</div>
<div class="t" style="left:471.50px;top:1014px;font-size:11.5px;line-height:11.5px;color:#f2f2f2;font-weight:bold;transform:scaleX(1.0261);">Equilibrium not required</div>
<div class="t" style="left:625.50px;top:1014px;font-size:11.5px;line-height:11.5px;color:#c4c4c4;transform:scaleX(0.9700);">Units:</div>
<div class="t" style="left:657.00px;top:1014px;font-size:11.5px;line-height:11.5px;color:#f2f2f2;font-weight:bold;transform:scaleX(0.9770);">in</div>
<div class="abs" style="left:0;top:63px;width:1.1px;height:938px;background:#000"></div>
</div></body></html>
